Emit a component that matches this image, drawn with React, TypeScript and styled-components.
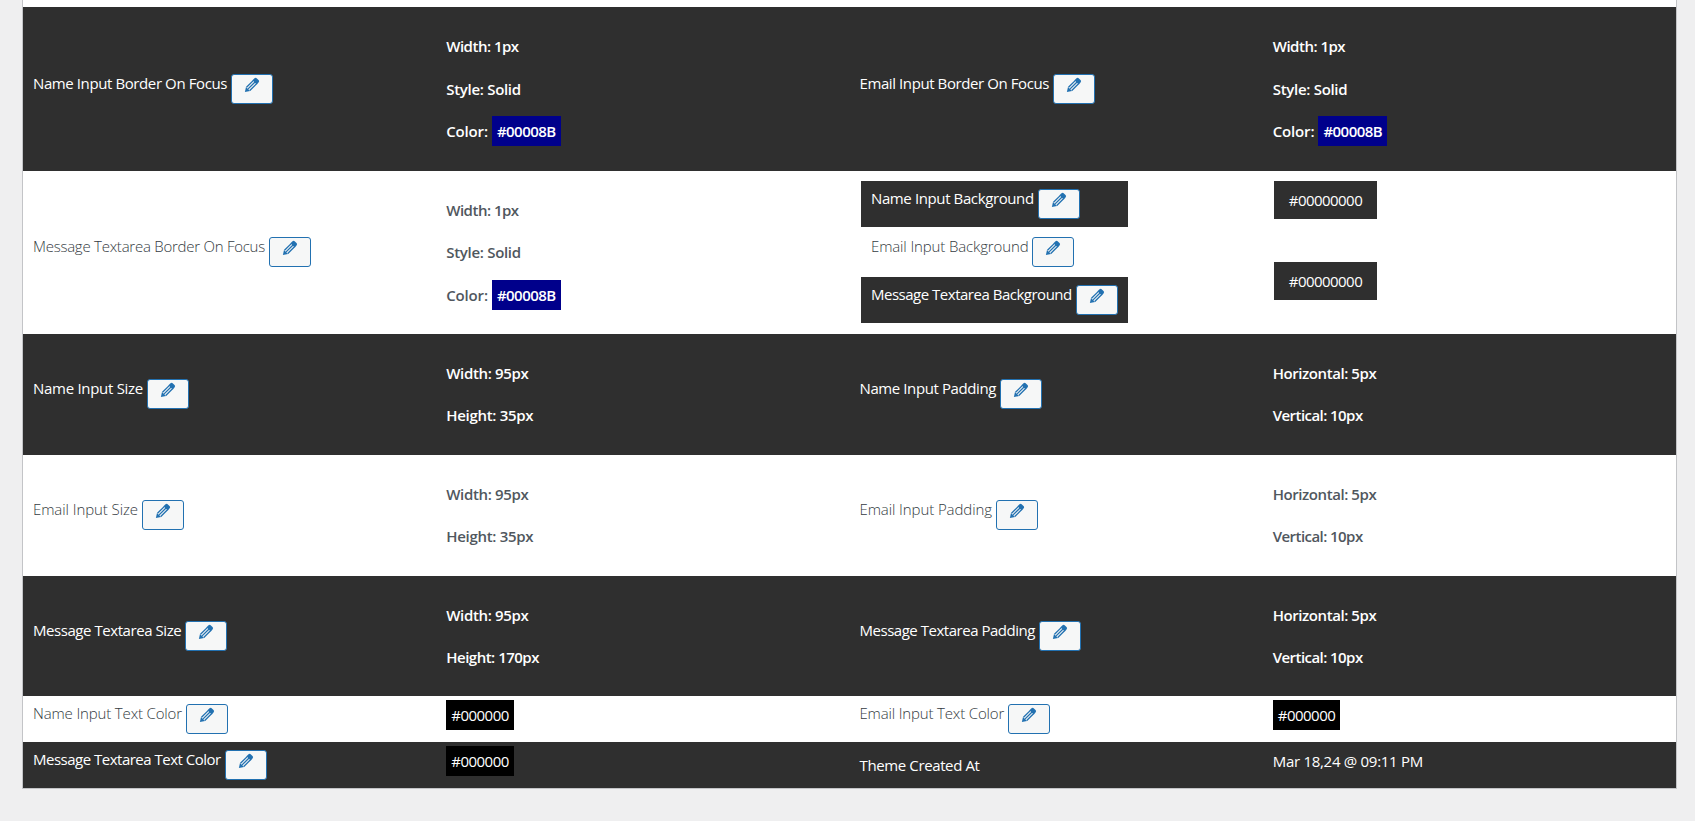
import React from "react";
import styled, { createGlobalStyle, css } from "styled-components";

const GlobalStyle = createGlobalStyle`
  html, body { margin: 0; background: #efeff0; }
  body {
    font-family: "Open Sans", "Noto Sans", sans-serif;
    font-size: 15px;
    line-height: 22.5px;
    overflow: hidden;
  }
  *, *::before, *::after { box-sizing: border-box; }
`;

const Page = styled.main`
  height: 821px;
  padding: 0 18px 0 22px;
`;

const Table = styled.section`
  background: #fff;
  border: 1px solid #c3c4c7;
  border-top: 0;
  padding-top: 7px;
`;

const Row = styled.div<{ $height: number; $dark?: boolean }>`
  display: grid;
  grid-template-columns: repeat(4, 1fr);
  height: ${(p) => p.$height}px;
  background: ${(p) => (p.$dark ? "#2f2f2f" : "#fff")};
  color: ${(p) => (p.$dark ? "#fff" : "#50575e")};
  --label-weight: ${(p) => (p.$dark ? 400 : 300)};
  --label-color: ${(p) => (p.$dark ? "#fff" : "#343b42")};
`;

const Cell = styled.div<{ $top?: number }>`
  padding: ${(p) => p.$top ?? 0}px 10px 0;
  min-width: 0;
`;

const LabelCell = styled.div`
  display: flex;
  align-items: center;
  padding: 0 10px 1px;
  min-width: 0;
`;

const Text = styled.span<{ $track?: number }>`
  letter-spacing: ${(p) => p.$track ?? 0}px;
  white-space: nowrap;
`;

const LabelText = styled(Text)`
  color: var(--label-color);
  font-weight: var(--label-weight);
  padding-bottom: 11px;
`;

const EditButton = styled.button`
  display: flex;
  justify-content: center;
  align-items: flex-start;
  flex: none;
  width: 42px;
  height: 30px;
  margin: 0 0 0 4px;
  padding: 2px 0 0;
  border: 1px solid #2271b1;
  border-radius: 3px;
  background: #f6f7f7;
  color: #2271b1;
`;

const Value = styled.p<{ $track?: number }>`
  margin: 0 0 20px;
  font-weight: 600;
  letter-spacing: ${(p) => p.$track ?? 0}px;
  white-space: nowrap;
`;

const Swatch = styled.span<{ $color: string; $bold?: boolean }>`
  display: inline-block;
  height: 30px;
  padding: 4px 5px 0;
  background: ${(p) => p.$color};
  color: #fff;
  font-weight: ${(p) => (p.$bold ? 600 : 400)};
  letter-spacing: -0.52px;
`;

const ColorLine = styled.div`
  display: flex;
  gap: 4px;
  height: 30px;
  margin-top: -4px;
  font-weight: 600;

  & > ${Text} {
    padding-top: 4px;
  }
`;

const Stack = styled.div`
  display: flex;
  flex-direction: column;
  gap: 2px;
  align-items: flex-start;
  padding: 10px 11.5px 0;
`;

const darkBox = css`
  background: #2f2f2f;
  color: #fff;
  --label-weight: 400;
  --label-color: #fff;
`;

const NestedLabel = styled.div<{ $dark?: boolean }>`
  display: flex;
  align-items: center;
  width: 267px;
  height: 46px;
  padding: 0 10px;
  ${(p) => p.$dark && darkBox}
`;

const NestedValue = styled.div`
  height: 38px;
  padding: 8px 15px 0 14.5px;
  letter-spacing: -0.54px;
  ${darkBox}
`;

const Gap = styled.div`
  height: 39px;
`;

function Pencil() {
  return (
    <svg width="16" height="16" viewBox="0 0 16 16" fill="none" aria-hidden="true">
      <path d="M.9 15.1 L2 9.9 L6.1 14 Z" fill="currentColor" />
      <path d="M2.5 10.3 L9.7 3.1 M4.1 11.9 L11.3 4.7 M5.8 13.5 L13 6.3" stroke="currentColor" strokeWidth="1.3" />
      <path d="M8.5 3.2 L10.5 1.3 Q11.7 .3 12.9 1.4 L14.5 3 Q15.6 4.1 14.7 5.3 L12.8 7.4 Z" fill="currentColor" />
    </svg>
  );
}

function Label({ text, track }: { text: string; track: number }) {
  return (
    <>
      <LabelText $track={track}>{text}</LabelText>
      <EditButton type="button" aria-label={`Edit ${text}`}>
        <Pencil />
      </EditButton>
    </>
  );
}

function BorderValues({ top }: { top: number }) {
  return (
    <Cell $top={top}>
      <Value $track={-0.5}>Width: 1px</Value>
      <Value $track={-0.3}>Style: Solid</Value>
      <ColorLine>
        <Text $track={-0.16}>Color:</Text>
        <Swatch $color="#00008b" $bold>#00008B</Swatch>
      </ColorLine>
    </Cell>
  );
}

type Measure = [text: string, track: number];

const widthValue: Measure = ["Width: 95px", -0.35];
const heightValue: Measure = ["Height: 35px", -0.3];
const tallHeightValue: Measure = ["Height: 170px", -0.5];
const paddingValues: Measure[] = [["Horizontal: 5px", -0.43], ["Vertical: 10px", -0.56]];

function Measures({ values }: { values: Measure[] }) {
  return (
    <Cell $top={27.5}>
      {values.map(([text, track]) => (
        <Value key={text} $track={track}>{text}</Value>
      ))}
    </Cell>
  );
}

export default function App() {
  return (
    <>
      <GlobalStyle />
      <Page>
        <Table>
          <Row $height={164} $dark>
            <LabelCell><Label text="Name Input Border On Focus" track={-0.4} /></LabelCell>
            <BorderValues top={28} />
            <LabelCell><Label text="Email Input Border On Focus" track={-0.41} /></LabelCell>
            <BorderValues top={28} />
          </Row>
          <Row $height={163}>
            <LabelCell><Label text="Message Textarea Border On Focus" track={-0.25} /></LabelCell>
            <BorderValues top={27.5} />
            <Stack>
              <NestedLabel $dark><Label text="Name Input Background" track={-0.385} /></NestedLabel>
              <NestedLabel><Label text="Email Input Background" track={-0.13} /></NestedLabel>
              <NestedLabel $dark><Label text="Message Textarea Background" track={-0.49} /></NestedLabel>
            </Stack>
            <Stack>
              <NestedValue>#00000000</NestedValue>
              <Gap />
              <NestedValue>#00000000</NestedValue>
            </Stack>
          </Row>
          <Row $height={121} $dark>
            <LabelCell><Label text="Name Input Size" track={-0.29} /></LabelCell>
            <Measures values={[widthValue, heightValue]} />
            <LabelCell><Label text="Name Input Padding" track={-0.4} /></LabelCell>
            <Measures values={paddingValues} />
          </Row>
          <Row $height={121}>
            <LabelCell><Label text="Email Input Size" track={-0.08} /></LabelCell>
            <Measures values={[widthValue, heightValue]} />
            <LabelCell><Label text="Email Input Padding" track={-0.09} /></LabelCell>
            <Measures values={paddingValues} />
          </Row>
          <Row $height={120} $dark>
            <LabelCell><Label text="Message Textarea Size" track={-0.44} /></LabelCell>
            <Measures values={[widthValue, tallHeightValue]} />
            <LabelCell><Label text="Message Textarea Padding" track={-0.475} /></LabelCell>
            <Measures values={paddingValues} />
          </Row>
          <Row $height={46}>
            <LabelCell><Label text="Name Input Text Color" track={-0.15} /></LabelCell>
            <Cell $top={4}><Swatch $color="#000">#000000</Swatch></Cell>
            <LabelCell><Label text="Email Input Text Color" track={-0.16} /></LabelCell>
            <Cell $top={4}><Swatch $color="#000">#000000</Swatch></Cell>
          </Row>
          <Row $height={46} $dark>
            <LabelCell><Label text="Message Textarea Text Color" track={-0.5} /></LabelCell>
            <Cell $top={4}><Swatch $color="#000">#000000</Swatch></Cell>
            <Cell $top={12}><Text $track={-0.38}>Theme Created At</Text></Cell>
            <Cell $top={8}><Text $track={-0.29}>Mar 18,24 @ 09:11 PM</Text></Cell>
          </Row>
        </Table>
      </Page>
    </>
  );
}
